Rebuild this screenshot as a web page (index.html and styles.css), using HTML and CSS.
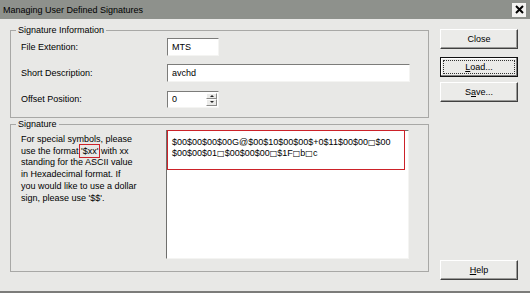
FILE: index.html
```html
<html>

<head>
    <link rel="stylesheet" href="styles.css">
</head>

<body>

    <div class="window">

        <div class="titlebar">
            <span class="title">Managing User Defined Signatures</span>
            <span class="close-x">
                <svg width="9" height="9" viewBox="0 0 9 9">
                    <path d="M1 1 L8 8 M8 1 L1 8" stroke="#000" stroke-width="2" />
                </svg>
            </span>
        </div>

        <div class="content">

            <div class="main">

                <fieldset class="group info">
                    <legend>Signature Information</legend>

                    <label>File Extention:</label>
                    <div class="input w-short">MTS</div>

                    <label>Short Description:</label>
                    <div class="input w-long">avchd</div>

                    <label>Offset Position:</label>
                    <div class="input spin">
                        <span class="spin-value">0</span>
                        <span class="spin-buttons">
                            <span class="spin-btn"><span class="arrow up"></span></span>
                            <span class="spin-btn"><span class="arrow down"></span></span>
                        </span>
                    </div>
                </fieldset>

                <fieldset class="group sig">
                    <legend>Signature</legend>

                    <div class="sig-help">
                        For special symbols, please<br>
                        use the format <span class="mark">'$xx'</span> with xx<br>
                        standing for the ASCII value<br>
                        in Hexadecimal format. If<br>
                        you would like to use a dollar<br>
                        sign, please use '$$'.
                    </div>

                    <div class="sig-box">
                        <div class="sig-text">$00$00$00$00G@$00$10$00$00$+0$11$00$00<span class="sq">□</span>$00<br>$00$00$01<span class="sq">□</span>$00$00$00<span class="sq">□</span>$1F<span class="sq">□</span>b<span class="sq">□</span>c</div>
                    </div>
                </fieldset>

            </div>

            <div class="buttons">
                <div class="btn">Close</div>
                <div class="btn focused"><span class="focus-ring"><u>L</u>oad...</span></div>
                <div class="btn save">S<u>a</u>ve...</div>
                <div class="btn help"><u>H</u>elp</div>
            </div>

        </div>

    </div>

</body>

</html>
```

FILE: styles.css
```css
body{
    margin: 0;
    font-family: "Liberation Sans", Arial, sans-serif;
    font-size: 9px;
    color: #000;
}

.window{
    width: 530px;
    height: 293px;
    box-sizing: border-box;
    background: #e8e8e6;
    border-bottom: 2px solid #7c7c7a;
    display: flex;
    flex-direction: column;
}

.titlebar{
    height: 19px;
    flex: none;
    background: #8e918c;
    display: flex;
    align-items: center;
    justify-content: space-between;
    padding: 0 4px 0 3px;
}

.close-x{
    width: 14px;
    height: 14px;
    background: #f3f3f1;
    display: flex;
    align-items: center;
    justify-content: center;
}

.content{
    flex: 1;
    display: flex;
    gap: 11px;
    padding: 0 12px 0 10px;
}

.main{
    width: 419px;
    padding-top: 5px;
}

.group{
    margin: 0;
    min-width: 0;
    border: 1px solid #a8a8a6;
}

.group legend{
    padding: 0 2px;
    margin-left: -5px;
    line-height: 12px;
}

.info{
    padding: 2px 18px 9px 10px;
    display: grid;
    grid-template-columns: 146px auto;
    grid-auto-rows: 18px;
    row-gap: 8px;
    align-items: center;
}

.input{
    height: 18px;
    box-sizing: border-box;
    background: #fff;
    border: 1px solid;
    border-color: #7c7c7a #f4f4f2 #f4f4f2 #7c7c7a;
    padding-left: 4px;
    line-height: 16px;
}

.w-short{
    width: 52px;
}

.w-long{
    width: 243px;
}

.spin{
    width: 52px;
    height: 17px;
    display: flex;
    line-height: 15px;
    padding-right: 1px;
}

.spin-value{
    flex: 1;
}

.spin-buttons{
    width: 11px;
    margin: 1px 0;
    display: flex;
    flex-direction: column;
}

.spin-btn{
    flex: 1;
    background: #ebebe9;
    border: 1px solid;
    border-color: #fff #8a8a88 #8a8a88 #fff;
    display: flex;
    align-items: center;
    justify-content: center;
}

.arrow{
    width: 0;
    height: 0;
    border-left: 2px solid transparent;
    border-right: 2px solid transparent;
}

.arrow.up{
    border-bottom: 2px solid #222;
}

.arrow.down{
    border-top: 2px solid #222;
}

.sig{
    padding: 0 18px 12px 10px;
    display: flex;
}

.sig-help{
    width: 145px;
    padding-top: 4px;
    line-height: 11.7px;
}

.mark{
    outline: 1px solid #cc2229;
    outline-offset: 1px;
}

.sig-box{
    width: 243px;
    height: 129px;
    box-sizing: border-box;
    background: #fff;
    border: 1px solid;
    border-color: #6f6f6d #f4f4f2 #f4f4f2 #6f6f6d;
}

.sig-text{
    width: 238px;
    height: 40px;
    box-sizing: border-box;
    margin-top: -1px;
    border: 1px solid #cc2229;
    padding: 6px 4px 0;
    line-height: 11px;
    white-space: nowrap;
}

.sq{
    font-family: "DejaVu Sans", sans-serif;
    font-size: 8px;
}

.buttons{
    width: 78px;
    display: flex;
    flex-direction: column;
    padding: 10px 0 11px;
}

.btn{
    height: 20px;
    box-sizing: border-box;
    background: #ebebe9;
    border: 1px solid;
    border-color: #fff #404040 #404040 #fff;
    box-shadow: inset -1px -1px #9a9a98;
    display: flex;
    align-items: center;
    justify-content: center;
}

.focused{
    margin-top: 8px;
    border-color: #111;
    box-shadow: inset -1px -1px #808080, inset 1px 1px #fff;
    align-items: stretch;
    justify-content: stretch;
}

.focus-ring{
    flex: 1;
    margin: 2px;
    border: 1px dotted #333;
    display: flex;
    align-items: center;
    justify-content: center;
}

.save{
    margin-top: 5px;
}

.help{
    margin-top: auto;
}
```
